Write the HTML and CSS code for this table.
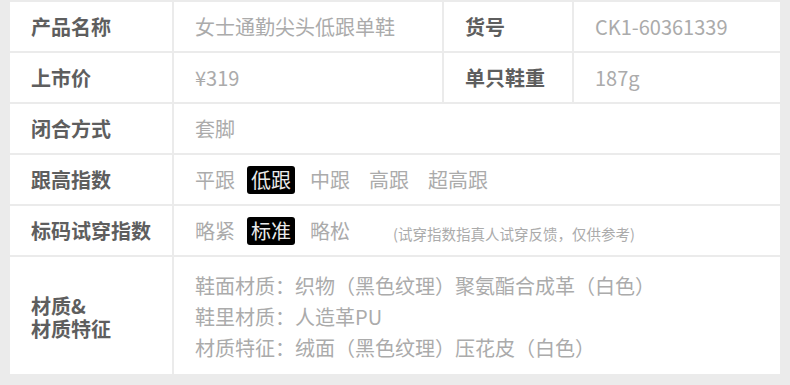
FILE: index.html
```html
<!DOCTYPE html>
<html lang="zh-CN">
<head>
<meta charset="utf-8">
<link rel="stylesheet" href="styles.css">
</head>
<body>
<div class="spec">
  <div class="cell label">产品名称</div>
  <div class="cell value">女士通勤尖头低跟单鞋</div>
  <div class="cell label">货号</div>
  <div class="cell value">CK1-60361339</div>

  <div class="cell label">上市价</div>
  <div class="cell value">¥319</div>
  <div class="cell label">单只鞋重</div>
  <div class="cell value">187g</div>

  <div class="cell label">闭合方式</div>
  <div class="cell value wide">套脚</div>

  <div class="cell label">跟高指数</div>
  <div class="cell value wide">
    <span class="opt">平跟</span><span class="opt on">低跟</span><span class="opt">中跟</span><span class="opt">高跟</span><span class="opt">超高跟</span>
  </div>

  <div class="cell label">标码试穿指数</div>
  <div class="cell value wide">
    <span class="opt">略紧</span><span class="opt on">标准</span><span class="opt">略松</span><span class="note">(试穿指数指真人试穿反馈，仅供参考)</span>
  </div>

  <div class="cell label multi"><div>材质&amp;</div><div>材质特征</div></div>
  <div class="cell value wide lines">
    <div>鞋面材质：织物（黑色纹理）聚氨酯合成革（白色）</div>
    <div>鞋里材质：人造革PU</div>
    <div>材质特征：绒面（黑色纹理）压花皮（白色）</div>
  </div>
</div>
</body>
</html>
```

FILE: styles.css
```css
html, body {
  margin: 0;
  padding: 0;
}
body {
  background: #ebebeb;
  width: 790px;
  height: 385px;
  overflow: hidden;
  font-family: "Noto Sans CJK SC", "Noto Sans", sans-serif;
}
.spec {
  margin: 2px 10px 0 10px;
  display: grid;
  grid-template-columns: 162px 268px 128px 206px;
  grid-template-rows: 49px 49px 49px 49px 49px 117px;
  gap: 2px;
}
.cell {
  background: #fff;
  display: flex;
  align-items: center;
  padding-left: 21px;
  font-size: 20px;
}
.label {
  color: #5e5e5e;
  font-weight: 700;
}
.value {
  color: #ababab;
}
.wide {
  grid-column: 2 / 5;
}
.opt {
  padding: 0 4px;
  margin-right: 11px;
  line-height: 28px;
  border-radius: 3px;
}
.opt:first-child {
  padding-left: 0;
  margin-right: 8px;
}
.opt.on {
  background: #000;
  color: #ececec;
}
.value .note {
  font-size: 14.5px;
  margin-left: 28px;
  position: relative;
  top: 3px;
}
.multi {
  flex-direction: column;
  align-items: flex-start;
  justify-content: center;
  line-height: 23px;
  padding-top: 3px;
}
.lines {
  flex-direction: column;
  align-items: flex-start;
  justify-content: center;
  line-height: 31px;
  padding-top: 1px;
}
```
